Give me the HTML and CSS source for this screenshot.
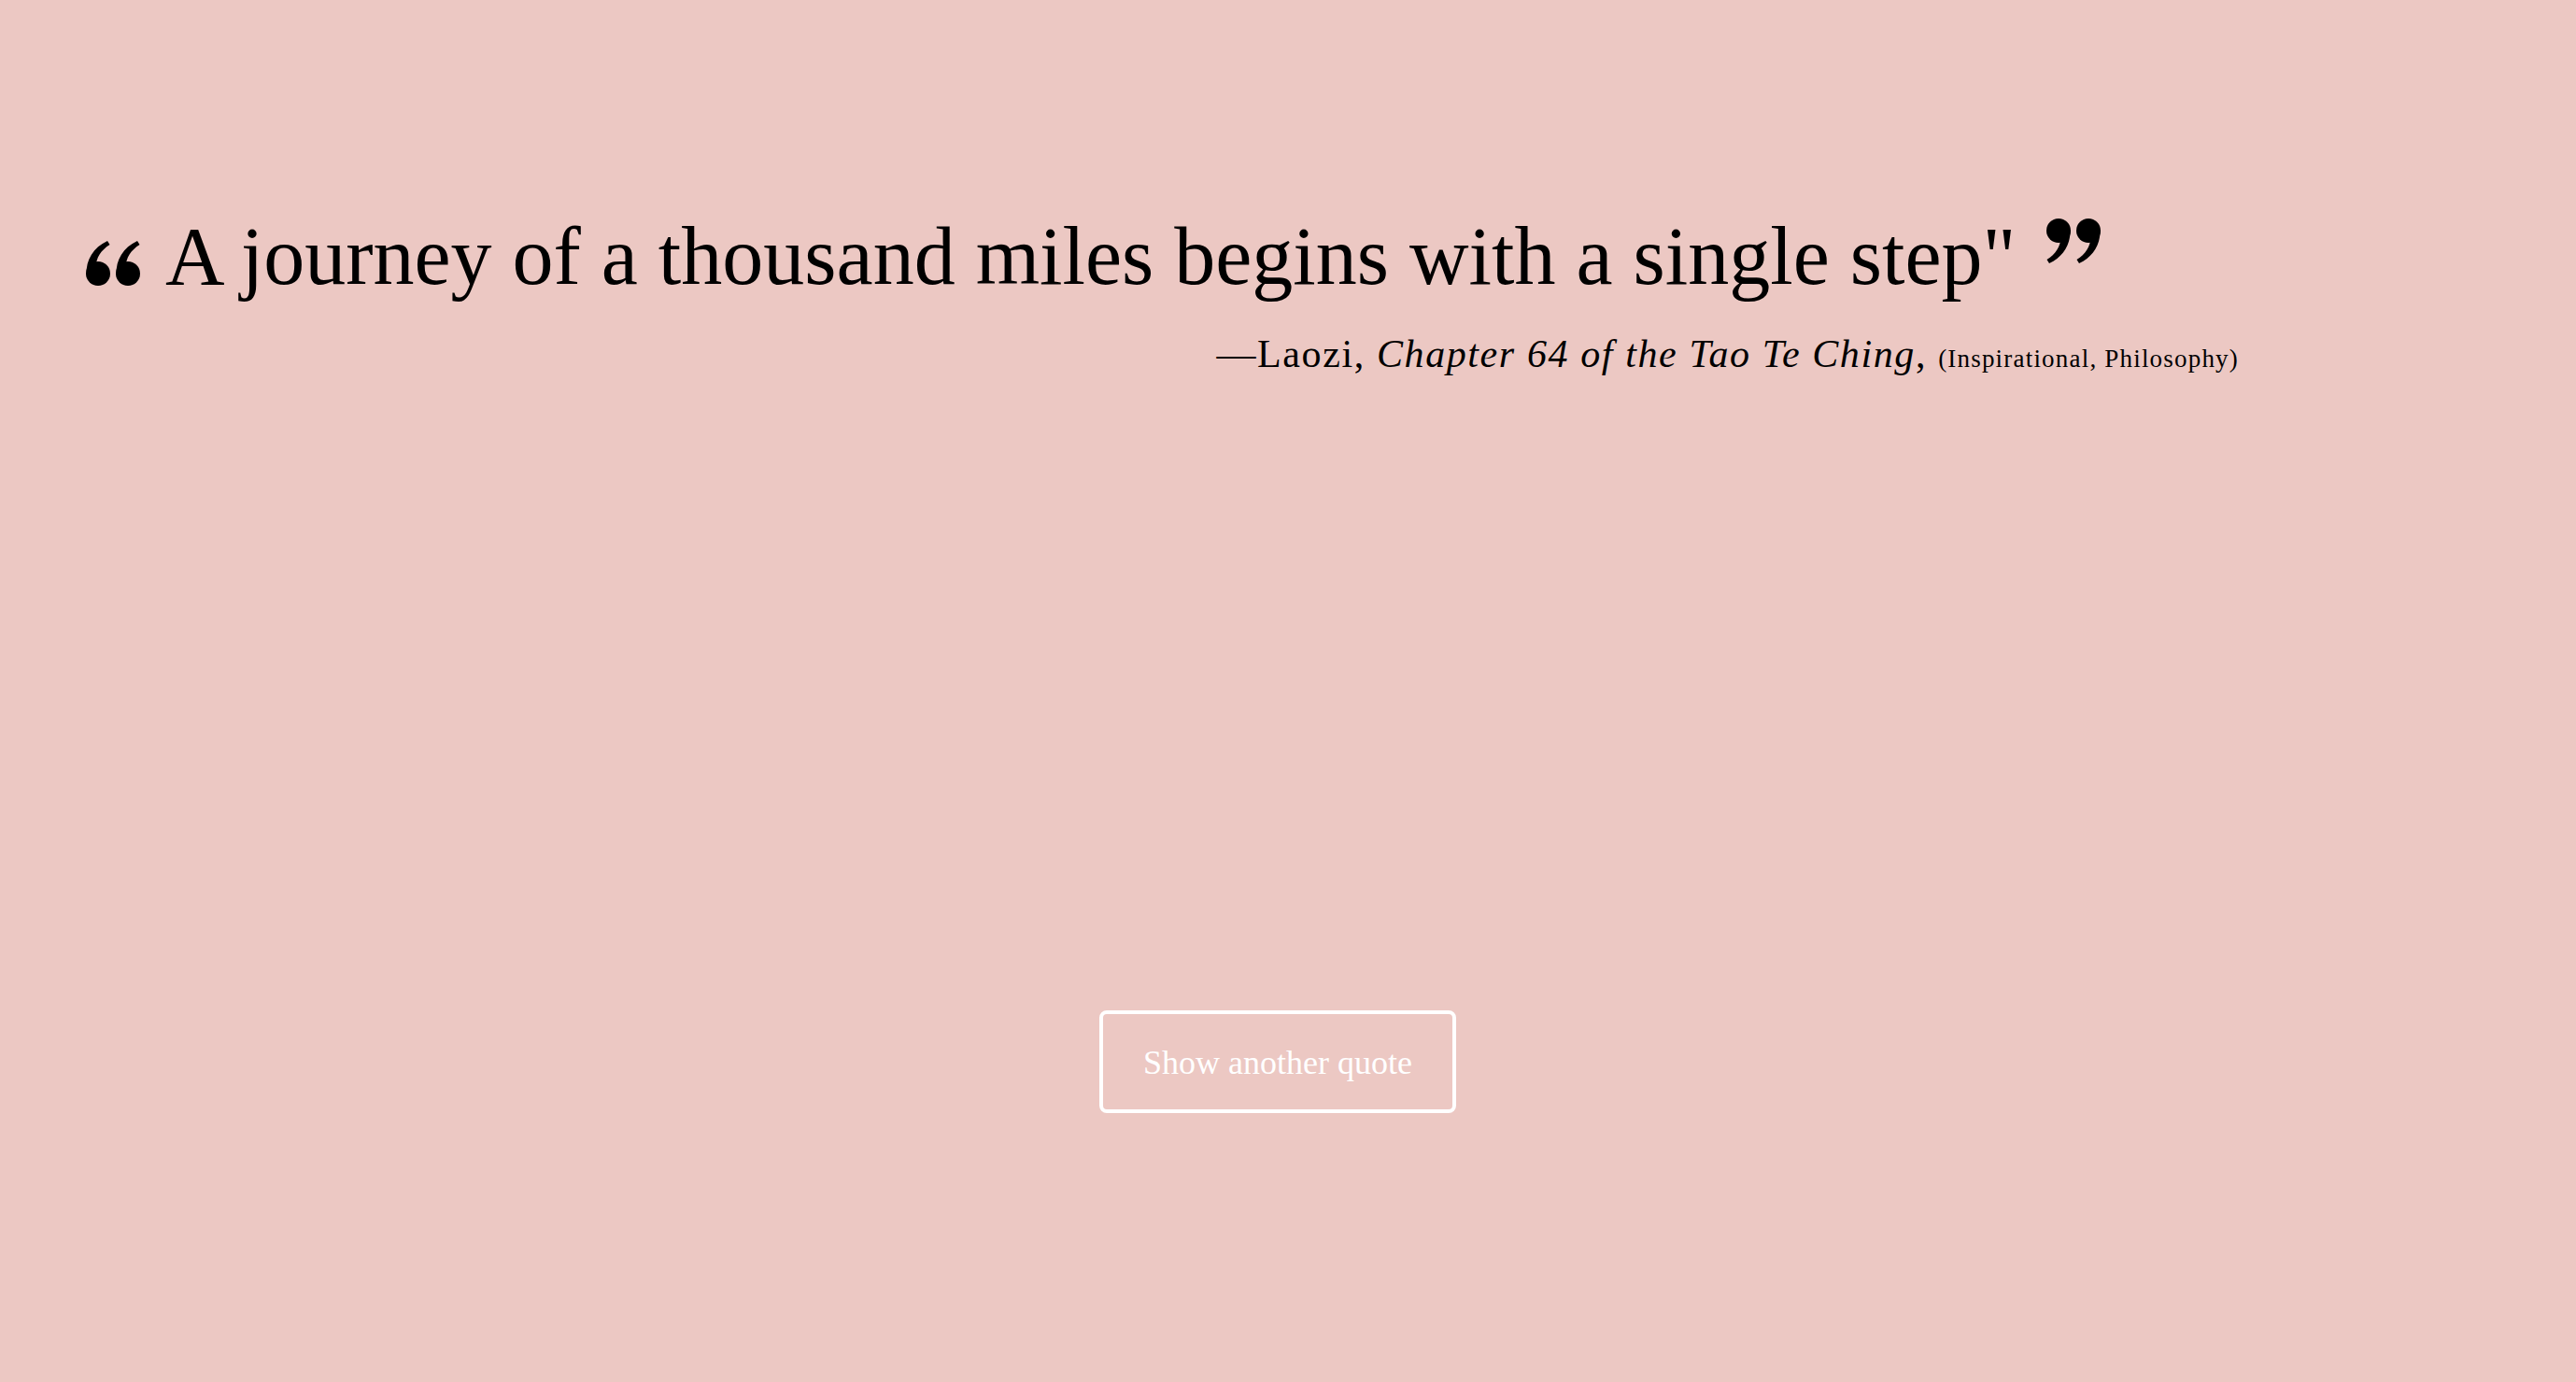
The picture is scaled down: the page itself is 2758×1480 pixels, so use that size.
FILE: index.html
```html
<!DOCTYPE html>
<html lang="en">
<head>
<meta charset="utf-8">
<title>Random Quote</title>
<link rel="stylesheet" href="styles.css">
</head>
<body>
<main class="page">
  <section class="quote-box">
    <p class="quote-text"><svg class="mark mark-open" viewBox="0 0 61 48" aria-hidden="true"><g><circle cx="14" cy="35" r="13"/><path d="M1.5 36 C1 20 9 7 24 0 L26.5 4 C17 10 12 18 11.5 28 Z"/></g><g transform="translate(32 0)"><circle cx="14" cy="35" r="13"/><path d="M1.5 36 C1 20 9 7 24 0 L26.5 4 C17 10 12 18 11.5 28 Z"/></g></svg>A journey of a thousand miles begins with a single step"<svg class="mark mark-close" viewBox="0 0 61 48" aria-hidden="true"><g transform="rotate(180 30.5 24)"><g><circle cx="14" cy="35" r="13"/><path d="M1.5 36 C1 20 9 7 24 0 L26.5 4 C17 10 12 18 11.5 28 Z"/></g><g transform="translate(32 0)"><circle cx="14" cy="35" r="13"/><path d="M1.5 36 C1 20 9 7 24 0 L26.5 4 C17 10 12 18 11.5 28 Z"/></g></g></svg></p>
    <p class="attribution">—Laozi, <cite class="source">Chapter 64 of the Tao Te Ching</cite>, <span class="tags">(Inspirational, Philosophy)</span></p>
  </section>
  <div class="actions">
    <button class="btn" type="button">Show another quote</button>
  </div>
</main>
</body>
</html>
```

FILE: styles.css
```css
html, body {
  margin: 0;
  padding: 0;
}

body {
  background: #ecc8c3;
  color: #000;
  font-family: "Liberation Serif", "Times New Roman", serif;
  height: 1480px;
  overflow: hidden;
}

.page {
  padding-top: 225px;
}

.quote-box {
  padding: 0 361px 0 91px;
}

.quote-text {
  margin: 0;
  font-size: 88px;
  line-height: 100px;
  white-space: nowrap;
}

.mark {
  fill: #000;
  width: 61px;
  height: 48px;
}

.mark-open {
  vertical-align: -2px;
  margin-right: 25px;
}

.mark-close {
  vertical-align: 22px;
  margin-left: 31px;
}

.attribution {
  margin: 30px 0 0;
  text-align: right;
  font-size: 42px;
  line-height: 48px;
  letter-spacing: 1.6px;
  white-space: nowrap;
}

.source {
  font-style: italic;
}

.tags {
  font-size: 27px;
  line-height: 30px;
  letter-spacing: 1.2px;
}

.actions {
  display: flex;
  justify-content: center;
  padding-right: 22px;
  margin-top: 679px;
}

.btn {
  box-sizing: border-box;
  width: 382px;
  padding: 32px 0 30px;
  background: transparent;
  border: 4px solid #fff;
  border-radius: 8px;
  color: #fff;
  font-family: "Liberation Serif", "Times New Roman", serif;
  font-size: 36px;
  line-height: 40px;
  cursor: pointer;
}
```
